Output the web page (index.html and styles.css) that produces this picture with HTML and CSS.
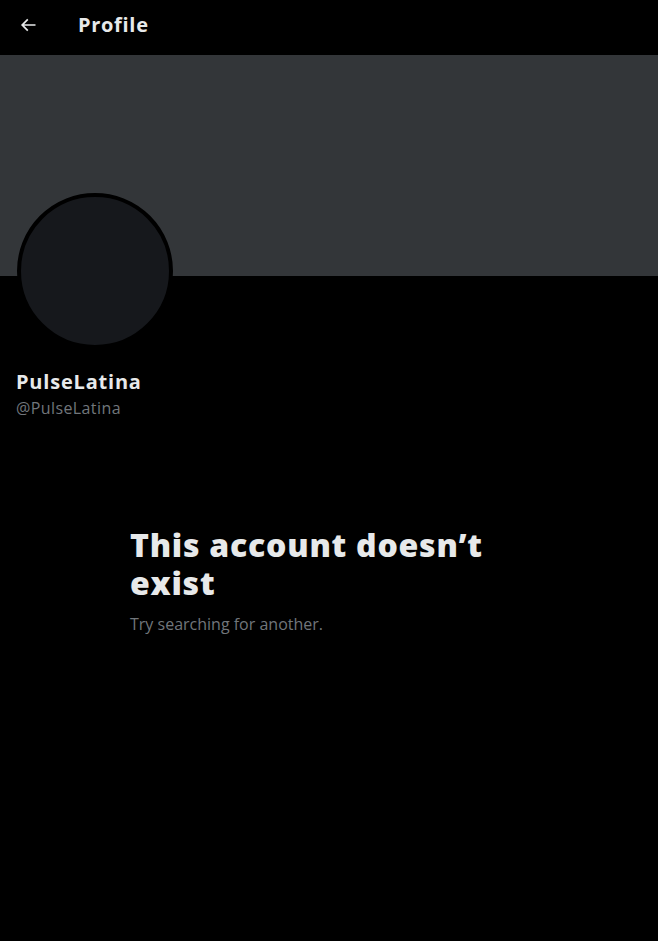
FILE: index.html
```html
<!DOCTYPE html>
<html>
<head>
<meta charset="utf-8">
<link rel="stylesheet" href="styles.css">
</head>
<body>
<div class="page">
  <header class="topbar">
    <div class="back">
      <svg viewBox="0 0 24 24" width="20" height="20"><path fill="#e7e9ea" d="M7.414 13l5.043 5.04-1.414 1.42L3.586 12l7.457-7.46 1.414 1.42L7.414 11H21v2H7.414z"/></svg>
    </div>
    <h1 class="title">Profile</h1>
  </header>
  <div class="banner"></div>
  <div class="profile">
    <div class="avatar-row"><div class="avatar"></div></div>
    <div class="name">PulseLatina</div>
    <div class="handle">@PulseLatina</div>
  </div>
  <div class="empty">
    <h2 class="empty-title">This account doesn’t exist</h2>
    <p class="empty-sub">Try searching for another.</p>
  </div>
</div>
</body>
</html>
```
FILE: styles.css
```css
html, body { margin: 0; padding: 0; background: #000; }
body { font-family: "Open Sans", "Inter", "Liberation Sans", sans-serif; color: #e7e9ea; }
.page { width: 658px; min-height: 941px; background: #000; }
.topbar { height: 53px; display: flex; align-items: center; padding: 0 16px; box-sizing: border-box; }
.back { width: 24px; height: 24px; display: flex; align-items: center; justify-content: center; margin-right: 38px; margin-top: -4px; }
.title { margin: 0 0 4px; font-size: 20px; font-weight: 700; line-height: 24px; letter-spacing: 0.7px; }
.banner { height: 221px; background: #333639; margin-top: 2px; }
.profile { padding: 0 16px; }
.avatar-row { height: 78px; display: flex; align-items: flex-start; }
.avatar { width: 148px; height: 148px; flex: none; border-radius: 50%; background: #16181c; border: 4px solid #000; margin-top: -83px; margin-left: 1px; }
.name { margin-top: 16px; font-size: 20px; font-weight: 700; line-height: 24px; letter-spacing: 0.8px; }
.handle { font-size: 16px; color: #71767b; line-height: 20px; margin-top: 4px; letter-spacing: 0.4px; }
.empty { width: 400px; margin: 108px auto 0; padding-left: 1px; box-sizing: border-box; }
.empty-title { margin: 0; font-size: 32px; font-weight: 800; line-height: 38px; letter-spacing: 0.75px; max-width: 390px; }
.empty-sub { margin: 12px 0 0; font-size: 16px; color: #71767b; line-height: 20px; }
```
